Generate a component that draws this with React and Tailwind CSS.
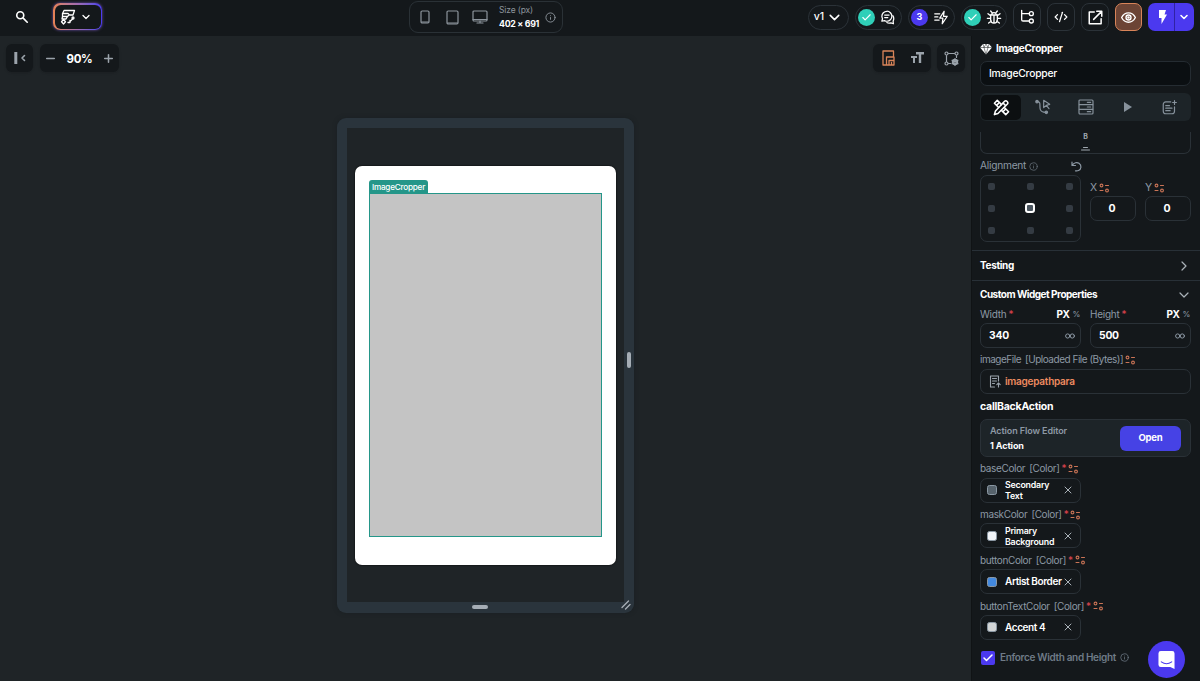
import {
  Check,
  ChevronDown,
  ChevronRight,
  CodeXml,
  Info,
  Minus,
  Plus,
  X,
} from "lucide-react";

const Svg = ({ className, children, box = "0 0 24 24", width = 2 }) => (
  <svg
    viewBox={box}
    className={className}
    fill="none"
    stroke="currentColor"
    strokeWidth={width}
    strokeLinecap="round"
    strokeLinejoin="round"
  >
    {children}
  </svg>
);

const SearchIcon = () => (
  <Svg className="w-[14px] h-[14px]" width={2.8}>
    <circle cx="9" cy="9" r="6" />
    <path d="M14 14l7 7" />
  </Svg>
);

const BrandIcon = () => (
  <Svg className="w-4 h-4" box="0 0 16 16" width={1.3}>
    <path d="M4 1.500h10.500L13 6H9.500L8 4.500H2.500zM2.500 4.500v3h5L9 6M2.500 7.500L2 10h4l1.500-2.500" />
    <path d="M3.500 10.500l2 2.200-2 2.300-2-2.300zM8 13.500h2V11.500M10.500 12l2.500-2.500" />
    <circle cx="13" cy="9" r="1" />
  </Svg>
);

const VarIcon = () => (
  <Svg className="w-[11px] h-[10px] text-[#cb7456] shrink-0" box="0 0 11 10" width={1.1}>
    <circle cx="2.500" cy="2.500" r="1.400" />
    <path d="M6.500 2.500h3M1 7.500h3" />
    <circle cx="8" cy="7.500" r="1.400" />
  </Svg>
);

const ChatIcon = () => (
  <Svg className="w-[15px] h-[15px]" width={2}>
    <path d="M11 2a8 8 0 0 0-8 8c0 2 1 3 1 4l-1 4 4-1a9 9 0 0 0 4 1 8 8 0 0 0 0-16z" />
    <path d="M7.500 8h7M7.500 12h5M20.500 9c3 4 1 7 .5 9l.5 4-4-1.500c-3 1-5 .5-6.500-.5" />
  </Svg>
);

const BoltLinesIcon = () => (
  <Svg className="w-[16px] h-[15px]" width={2}>
    <path d="M17 2l-7 11h5l-1 9 8-12h-6z" />
    <path d="M2 6h8M2 11h5M2 16h7" />
  </Svg>
);

const BugIcon = () => (
  <Svg className="w-[16px] h-[16px]" width={2}>
    <path d="M7 9h10v7a5 5 0 0 1-10 0zM8.500 9a3.500 3.500 0 0 1 7 0M12 10v11M9 5.500L7 3M15 5.500L17 3M7 14H2M17 14h5M7 10L3 7M17 10l4-3M8 18l-4 3M16 18l4 3" />
  </Svg>
);

const TreeIcon = () => (
  <Svg className="w-[16px] h-[16px]" width={2}>
    <path d="M4 2v14a2 2 0 0 0 2 2h9M4 7h11" />
    <circle cx="18.500" cy="7" r="3" />
    <circle cx="18.500" cy="18" r="3" />
  </Svg>
);

const OpenIcon = () => (
  <Svg className="w-[15px] h-[15px]" width={2.4}>
    <path d="M10 3H2v19h19v-8M14 2h8v8M21 3L9 15" />
  </Svg>
);

const EyeIcon = () => (
  <Svg className="w-[15px] h-[15px]" width={2.2}>
    <path d="M1 12c5-10 17-10 22 0-5 10-17 10-22 0z" />
    <circle cx="12" cy="12" r="4" />
    <circle cx="12" cy="12" r="1" />
  </Svg>
);

const DiamondIcon = () => (
  <svg viewBox="0 0 12 12" className="w-3 h-3">
    <path d="M3 1h6l3 3.500L6 11.500 0 4.500z" fill="#fff" />
    <path d="M0 4.500h12M3 1l1 3.500 2 7 2-7L9 1M4 4.500L6 1l2 3.500" stroke="#14181b" strokeWidth=".5" fill="none" />
  </svg>
);

const DesignIcon = () => (
  <Svg className="w-[17px] h-[17px] text-white" width={2.2}>
    <path d="M6 2L2 6l6 6M6 2l6 6M12 16l6 6 4-4-6-6M15 17l2-2M6 8l1.500-1.500" />
    <path d="M16 3.500q2-2 4 0t0 4L7 20.500l-5 1.500 1.500-5zM14 5.500l4 4" />
  </Svg>
);

const ActionsIcon = () => (
  <Svg className="w-[16px] h-[16px]" width={1.8}>
    <circle cx="3" cy="4" r="1.800" fill="currentColor" />
    <path d="M3 4c7 0 3 6 5 12 1 3 3 4 8 4" />
    <circle cx="17" cy="20" r="1.800" fill="currentColor" />
    <path d="M13 13V2l9 6-5 1.500zM17 9.500l4 5" />
  </Svg>
);

const BackendIcon = () => (
  <Svg className="w-[16px] h-[16px]" width={1.8}>
    <rect x="1.500" y="1.500" width="21" height="21" rx="1.500" />
    <path d="M2 8.500h20M2 15.500h20M14 5h5M14 12h5M14 19h5" />
  </Svg>
);

const NotesIcon = () => (
  <Svg className="w-[15px] h-[15px]" width={1.9}>
    <path d="M14 3H6a4 4 0 0 0-4 4v11a4 4 0 0 0 4 4h10a4 4 0 0 0 4-4v-7M6 9h6M6 13h10M6 17h7M20 1v6M17 4h6" />
  </Svg>
);

const UndoIcon = () => (
  <Svg className="w-[11px] h-[11px] ml-auto" box="0 0 11 11" width={1.2}>
    <path d="M1 1v3.500h3.500M1.300 4.200C3 1.500 6 1 8 2.300c3 2 2.300 6-.5 7.200-1 .5-2 .5-3 .3" />
  </Svg>
);

const FileIcon = () => (
  <Svg className="w-[12px] h-[13px] text-[#9aa3ac]" box="0 0 12 13" width={1.1}>
    <path d="M5.500 12H1.500V1h8v5M3.500 3.500h4M3.500 6h4M3.500 8.500h2M9.500 12V8M7.800 9.600L9.500 8l1.700 1.600" />
  </Svg>
);

const InfinityIcon = () => (
  <Svg className="w-[10px] h-[6px] text-[#8d99a5]" box="0 0 10 6" width={1}>
    <circle cx="2.700" cy="3" r="2.100" />
    <circle cx="7.300" cy="3" r="2.100" />
  </Svg>
);

const DevicePicker = () => (
  <div className="w-[154px] h-[32px] ml-[307px] mt-[1px] rounded-[9px] border border-[#2a3136] flex items-center text-[#8d959d]">
    <Svg className="w-[10px] h-[14px] ml-[10px]" box="0 0 10 14" width={1.2}>
      <rect x="1" y="1" width="8" height="12" rx="1.200" />
      <path d="M1.500 12h7" />
    </Svg>
    <Svg className="w-[13px] h-[15px] ml-[16px]" box="0 0 13 15" width={1.2}>
      <rect x="1" y="1" width="11" height="13" rx="1.200" />
      <path d="M1.500 13h10" />
    </Svg>
    <Svg className="w-[16px] h-[14px] ml-[13px]" box="0 0 16 14" width={1.2}>
      <rect x="1" y="1" width="14" height="10" rx="1" />
      <path d="M1 9.500h14M8 11v2M5 13h6" />
    </Svg>
    <div className="ml-[11px] w-[40px] whitespace-nowrap">
      <div className="text-[8.500px] leading-[13px] tracking-[-0.15px] text-[#8d959d]">Size (px)</div>
      <div className="text-[8.800px] leading-[14px] tracking-[-0.3px] font-bold text-white">402 × 691</div>
    </div>
    <Info className="w-[11px] h-[11px] ml-[6px] shrink-0" />
  </div>
);

const StatusPill = ({ count, className, children }) => (
  <div className={`h-[25px] rounded-full border border-[#2b3238] flex items-center pl-[2px] gap-[5px] ${className}`}>
    {count ? (
      <span className="w-[17px] h-[17px] rounded-full bg-[#4b39ef] text-[9px] font-bold flex items-center justify-center">
        {count}
      </span>
    ) : (
      <span className="w-[17px] h-[17px] rounded-full bg-[#2fcfb8] flex items-center justify-center">
        <Check className="w-[11px] h-[11px]" strokeWidth={2.5} />
      </span>
    )}
    {children}
  </div>
);

const SquareButton = ({ children }) => (
  <div className="w-[28px] h-[28px] ml-[6px] rounded-[8px] border border-[#2b3238] flex items-center justify-center">
    {children}
  </div>
);

const Topbar = () => (
  <div className="h-[36px] bg-[#14181b] flex items-start text-white shrink-0">
    <div className="ml-[15px] mt-[10px]">
      <SearchIcon />
    </div>
    <div className="ml-[24px] mt-[3px] w-[49px] h-[27px] rounded-[7px] p-[1.500px] bg-linear-to-r from-[#e68152] via-[#a16bb0] to-[#4b39ef] shadow-[0_0_3px_#7053b0]">
      <div className="w-full h-full rounded-[6px] bg-[#14181b] flex items-center justify-center gap-[4px] pr-[4px]">
        <BrandIcon />
        <ChevronDown className="w-[12px] h-[12px]" strokeWidth={2.6} />
      </div>
    </div>
    <DevicePicker />
    <div className="flex items-center ml-auto mt-[3px] mr-[6px]">
      <div className="w-[41px] h-[25px] rounded-full border border-[#2b3238] flex items-center justify-center gap-[2px] text-[10.500px] font-medium">
        v1 <ChevronDown className="w-[17px] h-[17px]" strokeWidth={2.2} />
      </div>
      <StatusPill className="w-[47px] ml-[6px]"><ChatIcon /></StatusPill>
      <StatusPill count={3} className="w-[47px] ml-[6px]"><BoltLinesIcon /></StatusPill>
      <StatusPill className="w-[46px] ml-[6px]"><BugIcon /></StatusPill>
      <SquareButton><TreeIcon /></SquareButton>
      <SquareButton><CodeXml className="w-[14px] h-[14px]" strokeWidth={2.2} /></SquareButton>
      <SquareButton><OpenIcon /></SquareButton>
      <div className="w-[27px] h-[28px] ml-[6px] rounded-[7px] border border-[#d98459] bg-[#6c4435] flex items-center justify-center">
        <EyeIcon />
      </div>
      <div className="w-[46px] h-[28px] ml-[6px] rounded-[7px] bg-[#4b39ef] flex items-center overflow-hidden">
        <div className="w-[27px] h-full border-r border-[#3022a4] flex items-center justify-center pl-[3px]">
          <svg viewBox="0 0 9 14" className="w-[9px] h-[14px]" fill="#fff">
            <path d="M1 0h7L6.500 4.500H9L3.500 14V8H1z" />
          </svg>
        </div>
        <ChevronDown className="w-[12px] h-[12px] ml-[3px]" strokeWidth={3.2} />
      </div>
    </div>
  </div>
);

const CanvasTools = () => (
  <div className="flex px-[6px] pt-[8px] text-[#9ba3ab]">
    <div className="w-[27px] h-[28px] rounded-[6px] bg-[#14181b] shadow flex items-center justify-center">
      <Svg className="w-[12px] h-[12px]" box="0 0 12 12" width={1.6}>
        <path d="M1.800 0v12" strokeWidth="3" strokeLinecap="butt" />
        <path d="M10.500 3.500L8 6l2.500 2.500" />
      </Svg>
    </div>
    <div className="w-[79px] h-[28px] ml-[7px] rounded-[6px] bg-[#14181b] shadow flex items-center justify-between px-[4px]">
      <Minus className="w-[13px] h-[13px]" strokeWidth={2.8} />
      <span className="text-[11.500px] leading-[14px] pt-[2px] font-bold tracking-[-0.3px] text-white">90%</span>
      <Plus className="w-[13px] h-[13px]" strokeWidth={2.8} />
    </div>
    <div className="w-[58px] h-[28px] ml-auto rounded-[6px] bg-[#14181b] shadow flex items-center justify-between pl-[9px] pr-[7px]">
      <Svg className="w-[13px] h-[16px] text-[#d98459]" box="0 0 13 16" width={1.3}>
        <path d="M4.500 15H1V1h10.500v6M4.500 15V7H12v8zM7 15v-4.500h5M9.500 12.500v2.500" />
      </Svg>
      <svg viewBox="0 0 13 12" className="w-[13px] h-[12px]" fill="currentColor">
        <path d="M5 0h8v2.400h-2.800V11H7.800V2.400H5zM0 4h6v2H4v5H2V6H0z" />
      </svg>
    </div>
    <div className="w-[28px] h-[28px] ml-[6px] rounded-[6px] bg-[#14181b] shadow flex items-center justify-center">
      <Svg className="w-[15px] h-[15px]" box="0 0 15 15" width={1.2}>
        <circle cx="2.500" cy="2.500" r="1.500" />
        <circle cx="12.500" cy="2.500" r="1.500" />
        <circle cx="2.500" cy="12.500" r="1.500" />
        <path d="M4.500 2.500h6M2.500 4.500v6M12.500 4.500v2M4.500 12.500h2" />
        <circle cx="11" cy="11" r="2.200" strokeWidth="2" />
        <path d="M11 7.500v7M8 9.300l6 3.400M8 12.700l6-3.400" />
      </Svg>
    </div>
  </div>
);

const Phone = () => (
  <div className="relative ml-[337px] mt-[46px] w-[297px] h-[495px] rounded-[9px] bg-[#2a343c] pt-[10px] px-[10px] shadow-[0_0_4px_#1a1f23]">
    <div className="h-[474px] bg-[#1f2427] pt-[38px] px-[8px]">
      <div className="h-[399px] rounded-[7px] bg-white pt-[14px] px-[14px] shadow-[0_0_2px_#000]">
        <div className="w-[59px] h-[13px] rounded-t-[3px] bg-[#249689] text-white text-[8.200px] leading-[14px] tracking-[-0.25px] font-medium text-center whitespace-nowrap">
          ImageCropper
        </div>
        <div className="h-[344px] bg-[#c4c4c4] border border-[#249689]" />
      </div>
    </div>
    <div className="absolute right-[3px] top-[234px] w-[4px] h-[16px] rounded-full bg-[#a5adb5]" />
    <div className="absolute left-[135px] bottom-[4px] w-[16px] h-[4px] rounded-full bg-[#a5adb5]" />
    <Svg className="absolute right-[3px] bottom-[3px] w-[10px] h-[10px] text-[#a5adb5]" box="0 0 10 10" width={1.4}>
      <path d="M1 7.500L7.500 1M4.500 9L9 4.500" />
    </Svg>
  </div>
);

const tabs = [<DesignIcon />, <ActionsIcon />, <BackendIcon />, null, <NotesIcon />];

const Tabs = () => (
  <div className="h-[28px] mt-[7px] rounded-[6px] bg-[#1d2428] flex items-center px-[1px] text-[#87929c] shrink-0">
    {tabs.map((icon, i) => (
      <div
        key={i}
        className={`flex-1 h-[25px] rounded-[5px] flex items-center justify-center ${
          i === 0 ? "bg-[#0c0f11]" : "pl-[2px]"
        }`}
      >
        {icon || (
          <svg viewBox="0 0 8 10" className="w-[8px] h-[10px]" fill="currentColor">
            <path d="M0 0l8 5-8 5z" />
          </svg>
        )}
      </div>
    ))}
  </div>
);

const AxisField = ({ label }) => (
  <div className="w-[46px] pt-[6px]">
    <div className="h-[14px] flex items-center gap-[2px] text-[10.500px] text-[#8d99a5]">
      {label} <VarIcon />
    </div>
    <div className="h-[25px] mt-[1px] rounded-[7px] border border-[#2a3137] flex items-center justify-center pr-[2px] text-[10.500px] font-bold">
      0
    </div>
  </div>
);

const Alignment = () => (
  <div className="h-[96px] shrink-0">
    <div className="h-[21px] w-[102px] pt-[3px] flex items-center text-[10.200px] text-[#8d99a5]">
      <span className="tracking-[-0.25px]">Alignment</span>
      <Info className="w-[9px] h-[9px] ml-[3px] text-[#67717b]" />
      <UndoIcon />
    </div>
    <div className="flex">
      <div className="w-[101px] h-[67px] rounded-[7px] border border-[#2a3137] grid grid-cols-3 justify-items-center content-between gap-0 py-[7px] px-[7px] [&>*:nth-child(3n+1)]:justify-self-start [&>*:nth-child(3n)]:justify-self-end">
        {[0, 1, 2, 3, 4, 5, 6, 7, 8].map((n) => (
          <div
            key={n}
            className={
              n === 4
                ? "w-[10px] h-[10px] -my-[2px] rounded-[3px] border-2 border-white bg-[#4b5660]"
                : "w-[7px] h-[7px] rounded-[2px] bg-[#343b43]"
            }
          />
        ))}
      </div>
      <div className="ml-[9px] flex gap-[9px]">
        <AxisField label="X" />
        <AxisField label="Y" />
      </div>
    </div>
  </div>
);

const SizeField = ({ label, value }) => (
  <div className="w-[101px]">
    <div className="h-[18px] flex items-center text-[10px] text-[#8d99a5]">
      <span className="tracking-[-0.25px]">{label}</span>
      <span className="text-[#e0454f] ml-[2px]">*</span>
      <span className="ml-auto font-bold tracking-[-0.4px] text-white">PX</span>
      <span className="ml-[3px] mr-px text-[8px] tracking-[-0.4px]">%</span>
    </div>
    <div className="h-[25px] rounded-[7px] border border-[#2a3137] flex items-center justify-between pl-[8px] pr-[5px]">
      <span className="text-[10.300px] tracking-[-0.2px] font-bold">{value}</span>
      <InfinityIcon />
    </div>
  </div>
);

const colors = [
  { name: "baseColor", value: "Secondary Text", swatch: "bg-[#57636c]", wrap: true },
  { name: "maskColor", value: "Primary Background", swatch: "bg-[#f1f4f8]", wrap: true },
  { name: "buttonColor", value: "Artist Border", swatch: "bg-[#4389df]" },
  { name: "buttonTextColor", value: "Accent 4", swatch: "bg-[#d2d5d6]" },
];

const ColorField = ({ item }) => (
  <div className="h-[45.800px] shrink-0">
    <div className="h-[20.500px] pt-[3px] flex items-center text-[10px] tracking-[-0.36px] text-[#8d99a5] whitespace-nowrap">
      {item.name}
      <span className="ml-[4px]">[Color]</span>
      <span className="text-[#e0454f] ml-[2px] mr-[2px]">*</span>
      <VarIcon />
    </div>
    <div className="w-[101px] h-[25px] rounded-[7px] border border-[#2a3137] flex items-center pl-[6px] pr-[6px]">
      <span className={`w-[10px] h-[10px] rounded-[2.500px] border border-[#8b98a4] shrink-0 ${item.swatch}`} />
      <span
        className={`ml-[8px] flex-1 font-semibold ${
          item.wrap
            ? "mr-[10px] text-[8.800px] leading-[11px] tracking-[-0.2px]"
            : "text-[10px] tracking-[-0.4px] whitespace-nowrap"
        }`}
      >
        {item.value}
      </span>
      <X className="w-[12px] h-[12px] -ml-[8px] text-[#aab2b9] shrink-0" />
    </div>
  </div>
);

const Panel = () => (
  <div className="w-[229px] h-full bg-[#14181b] border-l border-[#101315] pr-[9px] pl-[8px] flex flex-col text-white shrink-0">
    <div className="h-[25px] flex items-center gap-[4px] text-[10px] font-bold tracking-[-0.3px] shrink-0">
      <DiamondIcon /> ImageCropper
    </div>
    <div className="h-[25px] rounded-[7px] border border-[#252c32] bg-[#0b0f12] flex items-center px-[8px] text-[10.300px] font-medium tracking-[-0.2px] shrink-0">
      ImageCropper
    </div>
    <Tabs />
    <div className="h-[22px] mt-[11px] rounded-b-[7px] border border-t-0 border-[#2a3137] flex flex-col items-center justify-between text-[#a0a8b0] shrink-0">
      <span className="text-[7px] leading-[9px] font-bold">B</span>
      <Svg className="w-[9px] h-[5px] mb-[2px]" box="0 0 9 5" width={1}>
        <path d="M2.500 1.500h4M.5 4h8" />
      </Svg>
    </div>
    <Alignment />
    <div className="h-[31px] -ml-[8px] -mr-[9px] pl-[8px] pr-[9px] border-y border-[#283037] flex items-center justify-between shrink-0">
      <span className="text-[10px] font-bold tracking-[-0.35px]">Testing</span>
      <ChevronRight className="w-[16px] h-[16px] text-[#aab2b9] -mr-[1px]" strokeWidth={1.8} />
    </div>
    <div className="h-[24px] pt-[3px] flex items-center justify-between shrink-0">
      <span className="text-[10px] font-bold tracking-[-0.5px]">Custom Widget Properties</span>
      <ChevronDown className="w-[16px] h-[16px] text-[#aab2b9] -mr-[1px]" strokeWidth={1.8} />
    </div>
    <div className="flex gap-[9px] shrink-0">
      <SizeField label="Width" value="340" />
      <SizeField label="Height" value="500" />
    </div>
    <div className="h-[21px] pt-[2px] flex items-center text-[10px] tracking-[-0.48px] text-[#8d99a5] whitespace-nowrap shrink-0">
      imageFile<span className="ml-[4px] mr-[2px]">[Uploaded File (Bytes)]</span>
      <VarIcon />
    </div>
    <div className="h-[25px] rounded-[7px] border border-[#2a3137] flex items-center pl-[8px] gap-[4px] text-[10px] tracking-[-0.25px] font-semibold text-[#ee8b60] shrink-0">
      <FileIcon /> imagepathpara
    </div>
    <div className="h-[25px] flex items-center text-[10.500px] font-bold tracking-[-0.25px] shrink-0">callBackAction</div>
    <div className="h-[38px] rounded-[7px] border border-[#2a3137] bg-[#1d2428] flex items-center justify-between pl-[9px] pr-[9px] shrink-0">
      <div>
        <div className="text-[9px] leading-[15px] tracking-[-0.1px] font-semibold text-[#8d99a5]">Action Flow Editor</div>
        <div className="text-[9px] leading-[15px] tracking-[-0.1px] font-bold">1 Action</div>
      </div>
      <div className="w-[61px] h-[25px] rounded-[6px] bg-[#4642e5] text-[9.500px] font-bold tracking-[-0.2px] flex items-center justify-center">
        Open
      </div>
    </div>
    {colors.map((item) => (
      <ColorField key={item.name} item={item} />
    ))}
    <div className="h-[35px] flex items-center shrink-0">
      <span className="w-[14px] h-[14px] ml-[1px] rounded-[2px] bg-[#4b39ef] flex items-center justify-center">
        <Check className="w-[12px] h-[12px]" strokeWidth={3} />
      </span>
      <span className="ml-[5px] text-[10px] tracking-[-0.33px] font-semibold text-[#6f7b87] whitespace-nowrap">Enforce Width and Height</span>
      <Info className="w-[9px] h-[9px] ml-[4px] text-[#6f7b87]" />
    </div>
  </div>
);

const App = () => {
  return (
    <div className="relative w-[1200px] h-[681px] overflow-hidden flex flex-col bg-[#1f2427] font-['Inter',sans-serif]">
      <Topbar />
      <div className="flex h-[645px]">
        <div className="flex-1 h-full bg-[#1f2427]">
          <CanvasTools />
          <Phone />
        </div>
        <Panel />
      </div>
      <div className="absolute left-[1148px] top-[641px] w-[37px] h-[37px] rounded-full bg-[#4b39ef] flex items-center justify-center">
        <svg viewBox="0 0 18 19" className="w-[17px] h-[18px]">
          <path d="M3 0h12a2.500 2.500 0 0 1 2.500 2.500V19L13 17H3A2.500 2.500 0 0 1 .5 14.500v-12A2.500 2.500 0 0 1 3 0z" fill="#fff" />
          <path d="M3.500 11.500q5.500 4 11 0" stroke="#4b39ef" strokeWidth="1.200" fill="none" strokeLinecap="round" />
        </svg>
      </div>
    </div>
  );
};

export default App;
